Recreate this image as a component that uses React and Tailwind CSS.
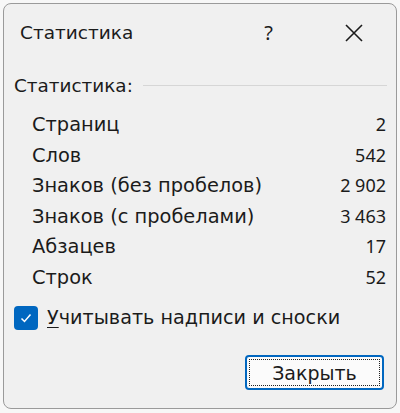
import React from 'react'

const rows = [
  ['Страниц', '2'],
  ['Слов', '542'],
  ['Знаков (без пробелов)', '2 902'],
  ['Знаков (с пробелами)', '3 463'],
  ['Абзацев', '17'],
  ['Строк', '52'],
]

const App = () => {
  return (
    <div className="w-[400px] h-[413px] bg-[#f7f7f7] p-[3px] pb-[4px] font-['DejaVu_Sans',sans-serif]">
      <div className="h-full rounded-[8px] border border-[#9a9a9a] bg-[#f0f0f0] flex flex-col text-[#1b1b1b]">
        <div className="flex items-center h-[58px] pl-[16px] pr-[33px]">
          <span className="text-[18.5px]">Статистика</span>
          <span className="ml-auto mr-[72px] text-[20px] font-['Noto_Sans',sans-serif]">?</span>
          <svg width="18" height="18" viewBox="0 0 18 18" className="shrink-0">
            <path d="M1 1 L17 17 M17 1 L1 17" stroke="#1b1b1b" strokeWidth="1.6" />
          </svg>
        </div>
        <div className="flex items-center pl-[10px] pr-[9px] mt-[10px]">
          <span className="text-[18.4px]">Статистика:</span>
          <div className="flex-1 h-px bg-[#d6d6d6] ml-[10px]" />
        </div>
        <div className="flex flex-col pl-[28px] pr-[10px] mt-[10px]">
          {rows.map(([label, value]) => (
            <div key={label} className="flex justify-between h-[30.5px] items-center">
              <span className="text-[19.4px]">{label}</span>
              <span className="text-[18px] font-['Noto_Sans',sans-serif]">{value}</span>
            </div>
          ))}
        </div>
        <label className="flex items-center gap-[9px] pl-[10px] mt-[11px]">
          <span className="w-[24px] h-[24px] rounded-[4px] bg-[#0067c0] flex items-center justify-center">
            <svg width="14" height="14" viewBox="0 0 14 14">
              <path d="M2.5 7.5 L5.5 10.5 L11.5 3.5" stroke="white" strokeWidth="1.5" fill="none" />
            </svg>
          </span>
          <span className="text-[19.2px]"><span className="underline underline-offset-[3px]">У</span>читывать надписи и сноски</span>
        </label>
        <div className="flex justify-end pr-[12px] mt-[23px]">
          <button className="w-[139px] h-[35px] rounded-[4px] border-2 border-[#0067c0] bg-[#fbfbfb] p-[2px]">
            <span className="flex h-full w-full items-center justify-center border border-dotted border-[#222] text-[19px]">Закрыть</span>
          </button>
        </div>
      </div>
    </div>
  )
}

export default App
